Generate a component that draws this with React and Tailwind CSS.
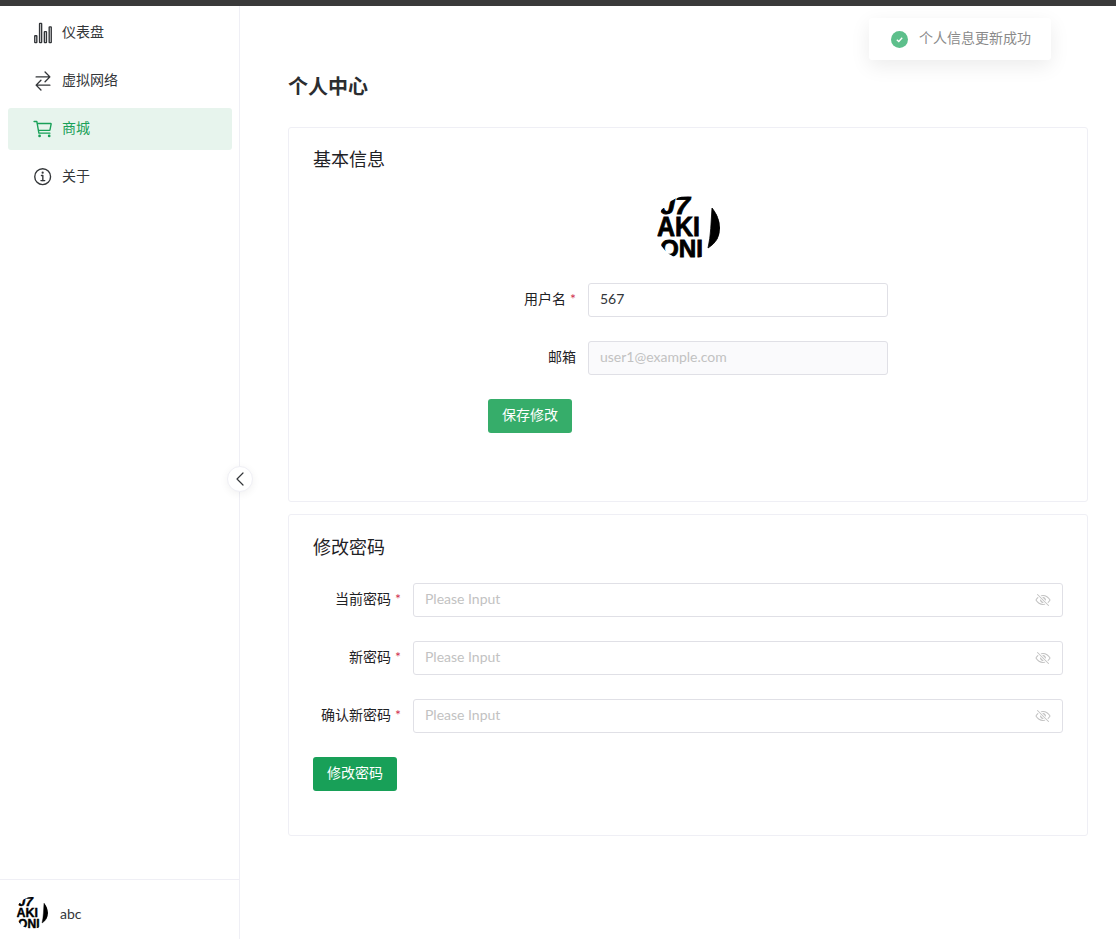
import React from 'react';
import { ChevronLeft } from 'lucide-react';
import {
  IoStatsChartOutline,
  IoSwapHorizontalOutline,
  IoCartOutline,
  IoInformationCircleOutline,
  IoEyeOffOutline,
} from 'react-icons/io5';

const FONT = 'font-["Lato","Noto_Sans_CJK_SC",sans-serif]';

const NAV = [
  { label: '仪表盘', icon: IoStatsChartOutline },
  { label: '虚拟网络', icon: IoSwapHorizontalOutline },
  { label: '商城', icon: IoCartOutline, active: true },
  { label: '关于', icon: IoInformationCircleOutline },
];

const PASSWORD_FIELDS = ['当前密码', '新密码', '确认新密码'];

function Logo({ size }) {
  return (
    <svg width={size} height={size} viewBox="0 0 64 64" className="shrink-0">
      <defs>
        <clipPath id={`logo-${size}`}>
          <circle cx="32" cy="32" r="32" />
        </clipPath>
      </defs>
      <g
        clipPath={`url(#logo-${size})`}
        fontFamily="Liberation Sans, sans-serif"
        fontWeight="700"
        stroke="#000"
        strokeWidth="0.8"
      >
        <path d="M56 12 C61 18 64 25 64 32 C64 40 60 47 52 52 C55 40 55 25 56 12 Z" fill="#000" />
        <text x="4" y="18" fontSize="24" fontStyle="italic" textLength="30" lengthAdjust="spacingAndGlyphs">J7</text>
        <text x="1" y="40" fontSize="27" textLength="43" lengthAdjust="spacingAndGlyphs">AKI</text>
        <text x="4" y="61" fontSize="24" textLength="43" lengthAdjust="spacingAndGlyphs">ONI</text>
      </g>
    </svg>
  );
}

function NavItem({ label, icon: Icon, active }) {
  return (
    <div
      className={`flex h-[42px] items-center rounded-[3px] pl-[24px] text-[14px] ${
        active ? 'bg-[#e7f4ed] text-[#18a058]' : 'text-[#333639]'
      }`}
    >
      <Icon className="mr-[8px] text-[22px]" />
      <span className="pb-[4px]">{label}</span>
    </div>
  );
}

function FieldRow({ label, required, labelWidth, children }) {
  return (
    <div className="flex h-[34px] items-center">
      <div
        className={`flex shrink-0 justify-end pb-[4px] pr-[12px] text-[14px] text-[#1f2225] ${labelWidth}`}
      >
        <span>{label}</span>
        {required && <span className="ml-[4px] text-[#d03050]">*</span>}
      </div>
      {children}
    </div>
  );
}

function Button({ children, color }) {
  return (
    <button className={`h-[34px] w-[84px] rounded-[3px] pb-[4px] text-[14px] text-white ${color}`}>
      {children}
    </button>
  );
}

export default function App() {
  return (
    <div className={`relative flex h-screen flex-col bg-white ${FONT}`}>
      <div className="h-[6px] shrink-0 bg-[#3a3a3a]" />

      <div className="flex min-h-0 flex-1">
        <aside className="relative flex w-[240px] shrink-0 flex-col justify-between border-r border-[#efeff5]">
          <nav className="flex flex-col gap-[6px] pl-[8px] pr-[7px] pt-[6px]">
            {NAV.map((item) => (
              <NavItem key={item.label} {...item} />
            ))}
          </nav>

          <div className="flex h-[60px] items-center gap-[12px] border-t border-[#efeff5] pl-[16px] pt-[6px] text-[14px] text-[#333639]">
            <Logo size={32} />
            <span className="pt-[2px]">abc</span>
          </div>

          <button className="absolute right-[-14px] top-[460px] flex h-[26px] w-[26px] items-center justify-center rounded-full border border-[#efeff5] bg-white text-[#333639] shadow-[0_2px_8px_rgba(0,0,0,0.06)]">
            <ChevronLeft size={24} strokeWidth={1.2} className="shrink-0" />
          </button>
        </aside>

        <main className="flex-1 pl-[48px] pr-[28px]">
          <h1 className="mb-[27px] mt-[66px] text-[20px] font-semibold leading-[28px] text-[#2b2d30]">
            个人中心
          </h1>

          <section className="h-[375px] rounded-[3px] border border-[#efeff5] px-[24px] pt-[19px]">
            <h2 className="text-[18px] leading-[25px] text-[#1f2225]">基本信息</h2>
            <div className="mt-[24px] flex justify-center">
              <Logo size={64} />
            </div>
            <div className="mx-auto mt-[23px] flex w-[400px] flex-col gap-[24px]">
              <FieldRow label="用户名" required labelWidth="w-[100px]">
                <div className="flex h-[34px] flex-1 items-center rounded-[3px] border border-[#e0e0e6] px-[11px] text-[14px] text-[#333639]">
                  <span className="pb-[4px]">567</span>
                </div>
              </FieldRow>
              <FieldRow label="邮箱" labelWidth="w-[100px]">
                <div className="flex h-[34px] flex-1 items-center rounded-[3px] border border-[#e0e0e6] bg-[#fafafc] px-[11px] text-[14px] text-[#c2c2c2]">
                  <span className="pb-[4px]">user1@example.com</span>
                </div>
              </FieldRow>
              <div>
                <Button color="bg-[#36ad6a]">保存修改</Button>
              </div>
            </div>
          </section>

          <section className="mt-[12px] h-[322px] rounded-[3px] border border-[#efeff5] px-[24px] pt-[19px]">
            <h2 className="pt-[1px] text-[18px] leading-[24px] text-[#1f2225]">修改密码</h2>
            <div className="mt-[24px] flex flex-col gap-[24px]">
              {PASSWORD_FIELDS.map((label) => (
                <FieldRow key={label} label={label} required labelWidth="w-[100px]">
                  <div className="flex h-[34px] flex-1 items-center justify-between rounded-[3px] border border-[#e0e0e6] px-[11px] text-[14px] text-[#c2c2c2]">
                    <span className="pb-[4px]">Please Input</span>
                    <IoEyeOffOutline className="text-[16px] text-[#c2c2c2]" />
                  </div>
                </FieldRow>
              ))}
              <div>
                <Button color="bg-[#18a058]">修改密码</Button>
              </div>
            </div>
          </section>
        </main>
      </div>

      <div className="absolute left-[869px] top-[18px] flex h-[42px] w-[182px] items-center rounded-[3px] bg-white pl-[22px] text-[14px] text-[#8a8a8a] shadow-[0_6px_20px_rgba(0,0,0,0.08)]">
        <span className="mr-[11px] flex h-[17px] w-[17px] items-center justify-center rounded-full bg-[#5dbf8b]">
          <svg width="9" height="9" viewBox="0 0 10 10" fill="none" stroke="white" strokeWidth="1.5">
            <path d="M2 5.2 L4.2 7.2 L8 3" />
          </svg>
        </span>
        <span className="pb-[4px]">个人信息更新成功</span>
      </div>
    </div>
  );
}
